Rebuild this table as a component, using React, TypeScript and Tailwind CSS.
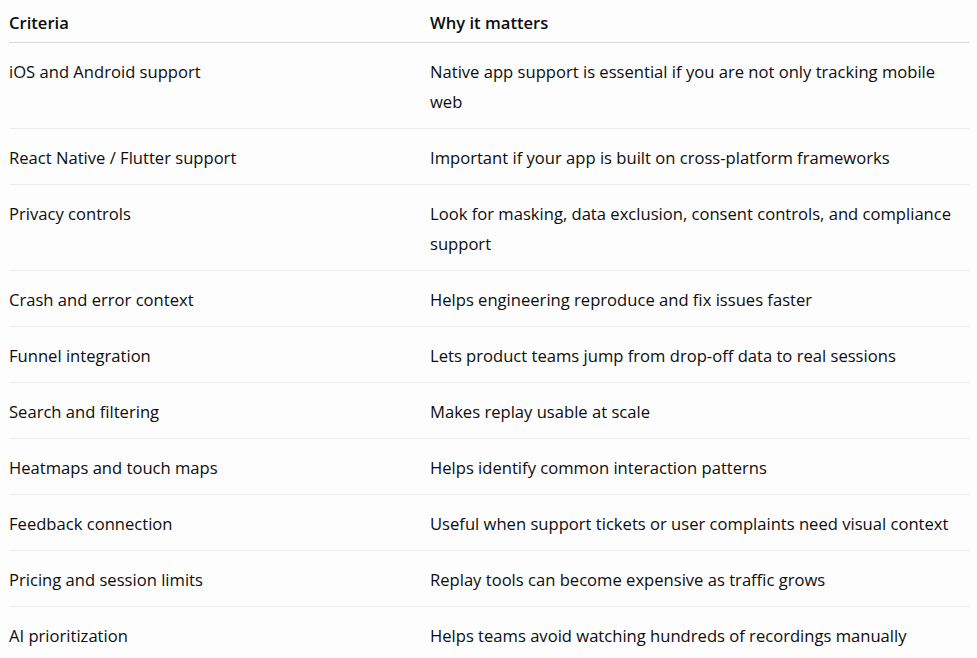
const rows: [string, string][] = [
  ["iOS and Android support", "Native app support is essential if you are not only tracking mobile web"],
  ["React Native / Flutter support", "Important if your app is built on cross-platform frameworks"],
  ["Privacy controls", "Look for masking, data exclusion, consent controls, and compliance support"],
  ["Crash and error context", "Helps engineering reproduce and fix issues faster"],
  ["Funnel integration", "Lets product teams jump from drop-off data to real sessions"],
  ["Search and filtering", "Makes replay usable at scale"],
  ["Heatmaps and touch maps", "Helps identify common interaction patterns"],
  ["Feedback connection", "Useful when support tickets or user complaints need visual context"],
  ["Pricing and session limits", "Replay tools can become expensive as traffic grows"],
  ["AI prioritization", "Helps teams avoid watching hundreds of recordings manually"],
];

export default function App() {
  return (
    <div
      className="min-h-screen bg-[#fdfdfd] text-[#0d0d0d] pl-[9px]"
      style={{ fontFamily: '"Open Sans", "Noto Sans", sans-serif' }}
    >
      <table className="w-[960px] border-collapse text-left text-[16.6px]">
        <thead>
          <tr className="border-b border-[#d9d9d9]">
            <th className="w-[421px] pt-[11px] pb-[8px] pr-3 font-semibold leading-[23px]">Criteria</th>
            <th className="pt-[11px] pb-[8px] font-semibold leading-[23px]">Why it matters</th>
          </tr>
        </thead>
        <tbody>
          {rows.map(([a, b], i) => (
            <tr key={a} className={i < rows.length - 1 ? "border-b border-[#ececec]" : ""}>
              <td className="align-top pt-[14px] pb-[11px] pr-3 leading-[30px]">{a}</td>
              <td className="align-top pt-[14px] pb-[11px] pr-4 leading-[30px]">{b}</td>
            </tr>
          ))}
        </tbody>
      </table>
    </div>
  );
}
